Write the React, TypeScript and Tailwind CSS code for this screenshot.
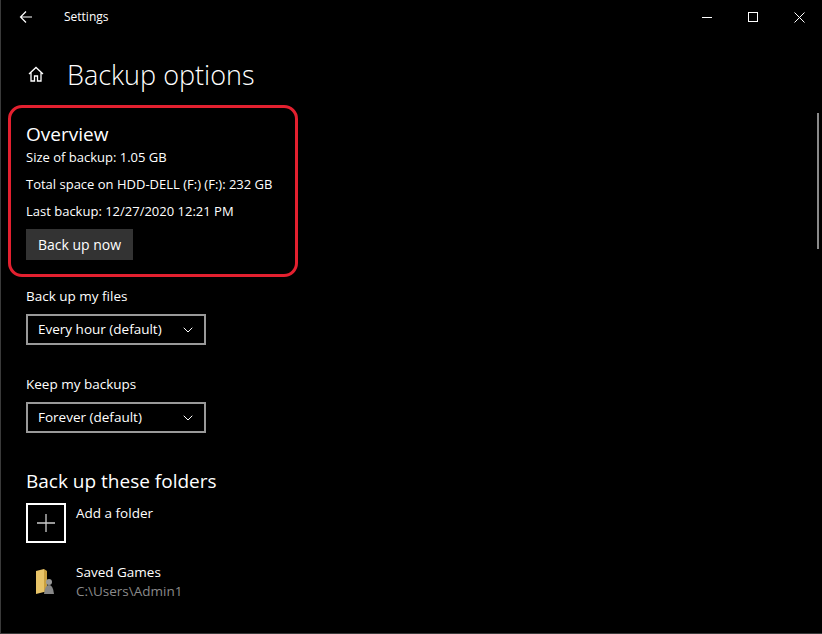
import React from 'react';
import { ChevronDown } from 'lucide-react';

const font = { fontFamily: '"Segoe UI", "Open Sans", "Noto Sans", sans-serif' };

const Dropdown: React.FC<{ label: string; value: string }> = ({ label, value }) => (
  <div>
    <div className="text-[13.5px] text-white leading-[18px]">{label}</div>
    <div className="mt-[9px] w-[180px] h-[31px] border-2 border-[#999] flex items-center justify-between pl-[10px] pr-[8px] text-[13.5px] text-white">
      <span>{value}</span>
      <ChevronDown className="w-[16px] h-[16px]" strokeWidth={1.5} />
    </div>
  </div>
);

export default function App() {
  return (
    <div className="w-[822px] h-[634px] bg-black text-white relative overflow-hidden border-l border-b border-[#3a3a3a]" style={font}>
      {/* title bar */}
      <div className="h-[34px] flex items-center">
        <svg className="ml-[18px] w-[14px] h-[14px]" viewBox="0 0 14 14" fill="none" stroke="white" strokeWidth="1.2">
          <path d="M13 7H1.5M7 1.5L1.5 7L7 12.5" />
        </svg>
        <span className="ml-[31px] text-[12px]">Settings</span>
        <div className="ml-auto flex items-center">
          <div className="w-[46px] flex justify-center"><div className="w-[10px] h-px bg-white" /></div>
          <div className="w-[46px] flex justify-center"><div className="w-[10px] h-[10px] border border-white" /></div>
          <div className="w-[46px] flex justify-center">
            <svg className="w-[11px] h-[11px]" viewBox="0 0 11 11" stroke="white" strokeWidth="1"><path d="M0.5 0.5L10.5 10.5M10.5 0.5L0.5 10.5" /></svg>
          </div>
        </div>
      </div>
      {/* scrollbar */}
      <div className="absolute right-[3px] top-[113px] w-[2px] h-[136px] bg-[#8a8a8a]" />

      {/* header */}
      <div className="flex items-center h-[44px] mt-[18px]">
        <svg className="ml-[26px] w-[18px] h-[18px]" viewBox="0 0 18 18" fill="none" stroke="white" strokeWidth="1.3">
          <path d="M2 9L9 2.5L16 9M4 7.5V16H7.5V11H10.5V16H14V7.5" />
        </svg>
        <span className="ml-[22px] text-[27px] font-light leading-none">Backup options</span>
      </div>

      <div className="pl-[25px]">
        {/* overview */}
        <div className="-ml-[18px] mt-[9px] w-[290px] h-[172px] border-[3px] border-[#e3202f] rounded-[14px] pl-[15px] pt-[15px]">
          <div className="text-[19px] leading-[22px]">Overview</div>
          <div className="text-[13px] leading-[27px] mt-[-1px]">
            <div>Size of backup: 1.05 GB</div>
            <div>Total space on HDD-DELL (F:) (F:): 232 GB</div>
            <div>Last backup: 12/27/2020 12:21 PM</div>
          </div>
          <div className="mt-[4px] w-[107px] h-[31px] bg-[#333] flex items-center justify-center text-[14px]">Back up now</div>
        </div>

        <div className="mt-[10px]"><Dropdown label="Back up my files" value="Every hour (default)" /></div>
        <div className="mt-[30px]"><Dropdown label="Keep my backups" value="Forever (default)" /></div>

        <div className="mt-[36px] text-[19px] leading-[24px]">Back up these folders</div>
        <div className="mt-[10px] flex">
          <div className="w-[40px] h-[40px] border-2 border-white flex items-center justify-center">
            <svg className="w-[18px] h-[18px]" viewBox="0 0 18 18" stroke="#ccc" strokeWidth="1.3"><path d="M9 0V18M0 9H18" /></svg>
          </div>
          <div className="ml-[10px] text-[13.5px] leading-[20px]">Add a folder</div>
        </div>
        <div className="mt-[20px] flex items-center">
          <svg className="ml-[8px] w-[24px] h-[28px]" viewBox="0 0 24 28">
            <path d="M2 3L10 1V24L2 26Z" fill="#e8c468" />
            <path d="M10 1L13 3V25L10 24Z" fill="#c9a040" />
            <circle cx="15" cy="14" r="3" fill="#999" />
            <path d="M10 26Q11 17 15 17Q19 17 20 26Z" fill="#888" />
          </svg>
          <div className="ml-[18px] text-[13.5px] leading-[19px]">
            <div>Saved Games</div>
            <div className="text-[#8a8a8a]">C:\Users\Admin1</div>
          </div>
        </div>
      </div>
    </div>
  );
}
